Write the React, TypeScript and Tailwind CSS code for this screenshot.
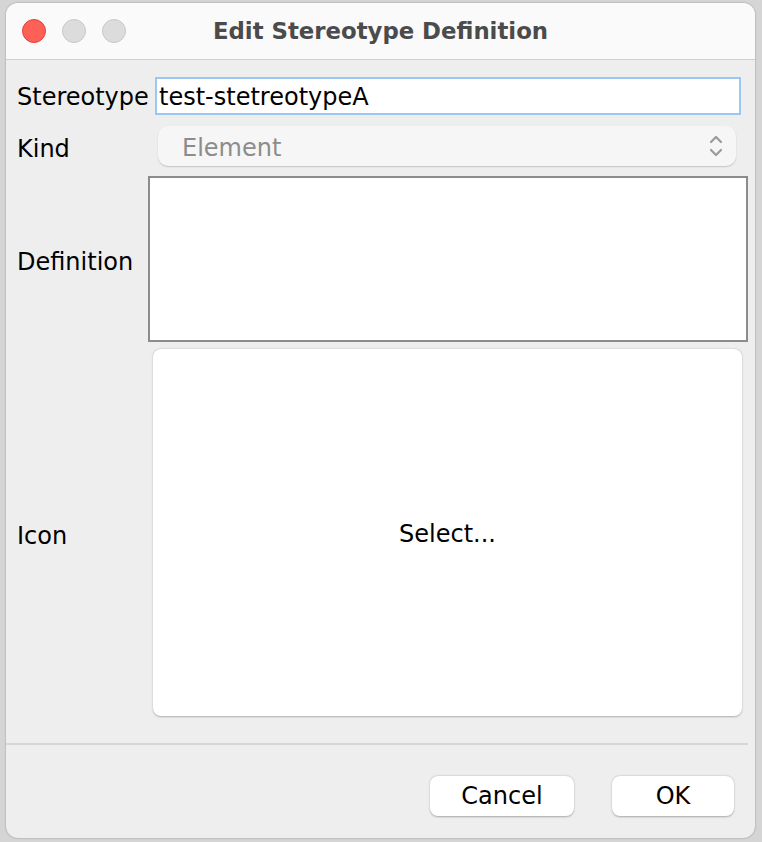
import React from 'react';

const font = { fontFamily: '"DejaVu Sans", "Liberation Sans", sans-serif' };

function TrafficLights() {
    return (
        <div className="flex items-center gap-[16px] pl-[16px]">
            <span className="block w-[24px] h-[24px] rounded-full bg-[#fe5f57] border border-[#e0443e]" />
            <span className="block w-[24px] h-[24px] rounded-full bg-[#dcdcdc] border border-[#c8c8c8]" />
            <span className="block w-[24px] h-[24px] rounded-full bg-[#dcdcdc] border border-[#c8c8c8]" />
        </div>
    );
}

function UpDown() {
    return (
        <svg width="16" height="26" viewBox="0 0 16 26" fill="none" stroke="#9a9a9a" strokeWidth="2.2" strokeLinecap="round" strokeLinejoin="round">
            <path d="M3 9 L8 4 L13 9" />
            <path d="M3 17 L8 22 L13 17" />
        </svg>
    );
}

export default function App() {
    return (
        <div className="w-[762px] h-[842px] bg-[#d5d5d5] pt-[3px] pl-[6px]" style={font}>
            <div className="w-[749px] h-[835px] rounded-[12px] bg-[#eeeeee] overflow-hidden flex flex-col shadow-[0_0_2px_rgba(0,0,0,0.35)]">
                {/* Title bar */}
                <div className="relative h-[57px] shrink-0 bg-[#fafafa] border-b border-[#cfcfcf] flex items-center">
                    <TrafficLights />
                    <div className="absolute inset-0 flex items-center justify-center text-[22.8px] font-bold text-[#4b4b4b] pointer-events-none">
                        Edit Stereotype Definition
                    </div>
                </div>

                {/* Form */}
                <div className="flex flex-col pl-[11px] text-[24px] text-black">
                    <div className="flex items-center mt-[17px] h-[38px]">
                        <div className="w-[131px] pt-[2px]">Stereotype</div>
                        <div className="ml-[7px] w-[586px] h-[38px] bg-white border-2 border-[#9cc6f4] flex items-center pl-[2px] pt-[2px] leading-none">
                            test-stetreotypeA
                        </div>
                    </div>

                    <div className="flex items-center mt-[11px] h-[40px]">
                        <div className="w-[131px] pt-[6px]">Kind</div>
                        <div className="ml-[10px] w-[578px] h-[40px] rounded-[10px] bg-[#f6f6f6] shadow-[0_1px_1.5px_rgba(0,0,0,0.18)] flex items-center justify-between pl-[24px] pr-[12px]">
                            <span className="text-[#8c8c8c] pt-[4px]">Element</span>
                            <UpDown />
                        </div>
                    </div>

                    <div className="flex items-center mt-[10px] h-[166px]">
                        <div className="w-[131px] pt-[6px]">Definition</div>
                        <div className="w-[600px] h-[166px] bg-white border-2 border-[#8c8c8c]" />
                    </div>

                    <div className="flex items-center mt-[7px] h-[367px]">
                        <div className="w-[131px] pt-[6px]">Icon</div>
                        <div className="ml-[5px] w-[589px] h-[367px] rounded-[8px] bg-white shadow-[0_0.5px_2px_rgba(0,0,0,0.28)] flex items-center justify-center pt-[2px]">
                            Select...
                        </div>
                    </div>
                </div>

                <div className="mt-[27px] w-[742px] h-[2px] bg-[#d6d6d6]" />

                <div className="flex justify-end gap-[38px] pr-[21px] mt-[31px] text-[24px] text-black">
                    <div className="w-[144px] h-[40px] rounded-[8px] bg-white shadow-[0_0.5px_2px_rgba(0,0,0,0.3)] flex items-center justify-center">
                        Cancel
                    </div>
                    <div className="w-[122px] h-[40px] rounded-[8px] bg-white shadow-[0_0.5px_2px_rgba(0,0,0,0.3)] flex items-center justify-center">
                        OK
                    </div>
                </div>
            </div>
        </div>
    );
}
